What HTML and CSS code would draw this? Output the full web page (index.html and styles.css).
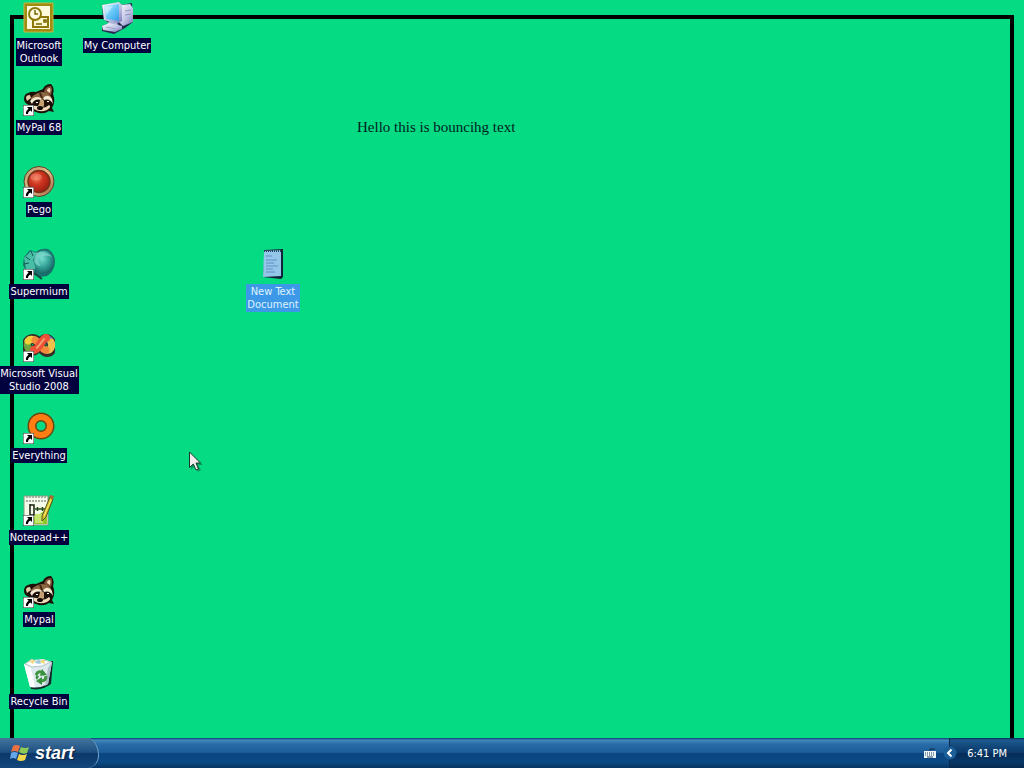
FILE: index.html
```html
<!DOCTYPE html>
<html lang="en">
<head>
<meta charset="utf-8">
<title>Desktop</title>
<link rel="stylesheet" href="styles.css">
</head>
<body>
<svg class="defs" aria-hidden="true">
  <defs>
    <symbol id="shortcut" viewBox="0 0 11 11">
      <path d="M0 0h11v11H0z" fill="#fff" stroke="#222" stroke-width="1"/>
      <path d="M4 2h5v5L7.400 5.400C5.500 6.500 5 7.500 5 9H3C2.500 6.500 4 5 5.600 3.700z" fill="#000"/>
    </symbol>
    <symbol id="raccoon" viewBox="0 0 32 32">
      <path d="M1 15Q1 10 5 9Q9 7 13 8L20 5Q22 0 28 0Q32 4 30 10Q33 18 29 24L31 28L26 27Q20 31 13 28Q8 27 6 21Q1 19 1 15z" fill="#1d1008"/>
      <path d="M21 8Q22 2 28 2Q30 5 28 11z" fill="#7c5334"/>
      <path d="M24 7Q24 4 27 4Q28 6 27 9z" fill="#f3dcc0"/>
      <path d="M3 14Q3 11 7 11L8 14L4 17z" fill="#e5cda7"/>
      <path d="M8 14Q12 9 19 8Q27 8 29 15Q23 10 19 15Q12 12 8 17z" fill="#8e6743"/>
      <path d="M7 17Q12 11 18 14L19 16Q11 14 9 20zM20 14Q25 9 29 15L30 20Q27 14 21 16z" fill="#f5e9d2"/>
      <path d="M17 16Q20 14 21 17L21 22Q18 26 14 23Q17 20 17 16z" fill="#c6a071"/>
      <path d="M10 22Q14 21 17 24Q23 24 26 21Q29 23 24 26Q17 29 11 25z" fill="#f0dcb9"/>
      <ellipse cx="17" cy="24" rx="3" ry="2" fill="#120a08"/>
      <path d="M13 18h2v1h-2zM24 17h2v1h-2z" fill="#fff"/>
      <path d="M17 9L19 14" stroke="#442713" stroke-width="2"/>
    </symbol>
    <linearGradient id="screen" x1="0" y1="0" x2="1" y2="1"><stop stop-color="#d5f5ff"/><stop offset=".5" stop-color="#68c9f6"/><stop offset="1" stop-color="#359ce7"/></linearGradient>
    <linearGradient id="shell" x1="0" y1="0" x2="1" y2="1"><stop stop-color="#fff"/><stop offset=".6" stop-color="#bdc2e3"/><stop offset="1" stop-color="#7074b0"/></linearGradient>
    <radialGradient id="red" cx=".38" cy=".35" r=".75"><stop stop-color="#f07855"/><stop offset=".4" stop-color="#ce3521"/><stop offset="1" stop-color="#8d1a0d"/></radialGradient>
    <linearGradient id="ring" x1="0" y1="0" x2="1" y2="1"><stop stop-color="#b59468"/><stop offset=".5" stop-color="#e5bf8a"/><stop offset="1" stop-color="#9c5a38"/></linearGradient>
    <radialGradient id="teal" cx=".4" cy=".35" r=".7"><stop stop-color="#79dfce"/><stop offset=".5" stop-color="#36a69a"/><stop offset="1" stop-color="#145f60"/></radialGradient>
  </defs>
</svg>
<main class="desktop">
  <div class="frame"></div>
  <p class="bouncing">Hello this is bouncihg text</p>

  <div class="icons">
    <button class="item" type="button">
      <svg class="icon" viewBox="0 0 32 32" aria-hidden="true">
        <path d="M2.500 2.500h26v26h-26z" fill="#fffadc" stroke="#a18c12" stroke-width="3"/>
        <path d="M1 1h29v29H1z" fill="none" stroke="#c9b444"/>
        <path d="M10 15h15v10H10z" fill="#fff7cc" stroke="#8d7909" stroke-width="2"/>
        <circle cx="12" cy="12" r="6" fill="#fffbe2" stroke="#8d7909" stroke-width="2"/>
        <path d="M12 8v4h3M13 22h6M21 18h2v2h-2z" fill="none" stroke="#756405" stroke-width="1.500"/>
      </svg>
      <span class="label">Microsoft<br>Outlook</span>
    </button>
    <button class="item" type="button">
      <svg class="icon" viewBox="0 0 32 32" aria-hidden="true"><use href="#raccoon"/><use href="#shortcut" x="0" y="21" width="11" height="11"/></svg>
      <span class="label">MyPal 68</span>
    </button>
    <button class="item" type="button">
      <svg class="icon" viewBox="0 0 32 32" aria-hidden="true">
        <circle cx="16" cy="15.500" r="15" fill="url(#ring)" stroke="#59442a"/>
        <circle cx="16" cy="15.500" r="11" fill="url(#red)" stroke="#74321b" stroke-width="1.500"/>
        <ellipse cx="13" cy="11" rx="6" ry="3.500" fill="#ffb49a" opacity=".3"/>
        <use href="#shortcut" x="0" y="21" width="11" height="11"/>
      </svg>
      <span class="label">Pego</span>
    </button>
    <button class="item" type="button">
      <svg class="icon" viewBox="0 0 32 32" aria-hidden="true">
        <path d="M1 9L7 2L13 4Q18 0 25 1Q32 5 32 14Q31 24 24 28L17 29L11 27L3 23L0 17z" fill="#1b6f6c"/>
        <path d="M1 10L8 3L14 5L10 12L13 19L9 26L3 21z" fill="#46bfa6"/>
        <ellipse cx="21" cy="14" rx="10" ry="11.500" fill="url(#teal)"/>
        <path d="M13 5Q22 1 29 9Q22 6 16 10Q14 14 18 18Q12 18 11 12z" fill="#8be0d5" opacity=".6"/>
        <path d="M3 9L7 12M8 3L10 8M1 16L6 15" stroke="#155956"/>
        <path d="M11 25L19 31" stroke="#134744" stroke-width="2"/>
        <use href="#shortcut" x="0" y="21" width="11" height="11"/>
      </svg>
      <span class="label">Supermium</span>
    </button>
    <button class="item" type="button">
      <svg class="icon" viewBox="0 0 32 32" aria-hidden="true">
        <g fill="none" stroke-linecap="round">
          <path d="M9 21C2 21 2 9 10 9C16 9 18 22 24 22C31 22 30 9 23 9C17 9 15 21 9 21" stroke="#372e29" stroke-width="10"/>
          <path d="M9 20C4 20 3 14 6 11" stroke="#6da63f" stroke-width="7"/>
          <path d="M5 11Q7 8 12 10" stroke="#f2cf3b" stroke-width="7"/>
          <path d="M28 13Q27 8 22 9" stroke="#5878bb" stroke-width="7"/>
          <path d="M28 12C30 17 27 21 23 20" stroke="#f0c04c" stroke-width="7"/>
          <path d="M12 10C16 12 18 20 23 20" stroke="#f28a3b" stroke-width="7"/>
          <path d="M23 8C18 9 16 20 11 20" stroke="#ed5138" stroke-width="8"/>
          <path d="M14 18L21 9" stroke="#f6a170" stroke-width="2"/>
        </g>
        <use href="#shortcut" x="0" y="21" width="11" height="11"/>
      </svg>
      <span class="label">Microsoft Visual<br>Studio 2008</span>
    </button>
    <button class="item" type="button">
      <svg class="icon" viewBox="0 0 32 32" aria-hidden="true">
        <path d="M11 21L7 25" stroke="#684713" stroke-width="6"/>
        <circle cx="18" cy="14" r="9" fill="none" stroke="#684713" stroke-width="9"/>
        <circle cx="18" cy="14" r="9" fill="none" stroke="#ff7d13" stroke-width="6"/>
        <use href="#shortcut" x="0" y="21" width="11" height="11"/>
      </svg>
      <span class="label">Everything</span>
    </button>
    <button class="item" type="button">
      <svg class="icon" viewBox="0 0 32 32" aria-hidden="true">
        <path d="M1 2h24v29H1z" fill="#f6fae8" stroke="#8a977d"/>
        <path d="M3 27L24 16V30H4z" fill="#8ec92c"/><path d="M12 20h8v9h-8z" fill="#c5e56c"/>
        <path d="M3 3h20M3 7h20" stroke="#a5aea2" stroke-width="2" stroke-dasharray="2 1"/>
        <path d="M7 10v14M7 11h4v10H7" fill="none" stroke="#16200e" stroke-width="1.500"/>
        <path d="M12 15h5m-2.500-2v4M17 15h5m-2.500-2v4" stroke="#234b18" stroke-width="1.500"/>
        <path d="M27 3L30 5L23 23L19 27V22z" fill="#d8c22b" stroke="#565118"/><path d="M26 3L27 1L31 2L30 5z" fill="#a86838"/>
        <path d="M28 6L21 22" stroke="#f6ef83"/>
        <use href="#shortcut" x="0" y="21" width="11" height="11"/>
      </svg>
      <span class="label">Notepad++</span>
    </button>
    <button class="item" type="button">
      <svg class="icon" viewBox="0 0 32 32" aria-hidden="true"><use href="#raccoon"/><use href="#shortcut" x="0" y="21" width="11" height="11"/></svg>
      <span class="label">Mypal</span>
    </button>
    <button class="item" type="button">
      <svg class="icon" viewBox="0 0 32 32" aria-hidden="true">
        <path d="M3 6L30 3L28 26Q19 33 8 31z" fill="#14282c"/>
        <path d="M1 6L10 2L20 1L29 4L25 26Q16 31 7 29z" fill="#dce9ed"/>
        <path d="M1 6L7 29L12 29L8 10z" fill="#fff"/><path d="M29 4L25 10L22 28L25 26z" fill="#adbdc7"/>
        <path d="M2 6L9 9L19 8L28 4L21 2L14 5L9 1z" fill="#faffff" stroke="#b5c5c4"/>
        <path d="M6 3L10 6L12 2zM17 4L21 1L22 6z" fill="#f4d66d"/><path d="M12 5L16 1L18 6z" fill="#9cc6dc"/>
        <path d="M13 17Q15 12 20 15M23 18Q23 23 18 23" fill="none" stroke="#41973f" stroke-width="3"/>
        <path d="M19 11L24 17L17 18zM19 19V27L13 23zM14 22Q12 20 13 17L16 18z" fill="#359038"/>
      </svg>
      <span class="label">Recycle Bin</span>
    </button>
    <button class="item computer" type="button">
      <svg class="icon" viewBox="0 0 32 32" aria-hidden="true">
        <path d="M20 3L31 1L32 20L24 26L13 32L1 29L1 24L8 21L2 17L1 3L19 1z" fill="#252c52"/>
        <path d="M20 3L29 2L32 6V20L22 24L17 19z" fill="url(#shell)"/>
        <path d="M24 9L30 8M24 13L30 12" stroke="#8d95c0"/>
        <path d="M1 3L18 0L21 3V19L15 22L3 18z" fill="url(#shell)"/>
        <path d="M3 4L18 2V19L5 17z" fill="url(#screen)"/>
        <path d="M4 5L12 4L5 13z" fill="#fff" opacity=".4"/>
        <path d="M8 19L16 21L18 24L10 26L6 23z" fill="#aeb5d6"/>
        <path d="M1 24L8 21L21 24V27L14 30L2 28z" fill="url(#shell)"/>
        <path d="M5 25L15 27" stroke="#a0a6c8"/>
      </svg>
      <span class="label">My Computer</span>
    </button>
    <button class="item document" type="button">
      <svg class="icon" viewBox="0 0 32 32" aria-hidden="true">
        <path d="M8 2L26 1V29L24 31L6 29z" fill="#102338"/>
        <path d="M7 3L24 2V28L6 29z" fill="#94c6ea"/>
        <path d="M7 3h17" stroke="#274865" stroke-width="2" stroke-dasharray="1 1"/>
        <path d="M9 8h6M9 12h11M9 15h8M9 18h12M9 21h7M9 24h9" stroke="#5c92c2"/>
      </svg>
      <span class="label selected">New Text<br>Document</span>
    </button>
  </div>

  <svg class="cursor" viewBox="0 0 14 22" aria-hidden="true">
    <path d="M2 3V19L6 15L9 21L12 19L9 14H14z" fill="#087d4d" opacity=".65"/>
    <path d="M.500 1V16.500L4.300 13L7 19L9.500 18L7 12H11.500z" fill="#f2ecec" stroke="#183829"/>
  </svg>
</main>

<footer class="taskbar">
  <button class="start" type="button">
    <svg class="flag" viewBox="0 0 20 20" aria-hidden="true">
      <path d="M3 3Q6 1 10 3L8 9Q4 7 1 9z" fill="#ed7042"/>
      <path d="M11 4Q15 6 19 4L17 10Q13 12 9 9z" fill="#8fca55"/>
      <path d="M1 10Q4 8 8 10L6 16Q3 14 0 16z" fill="#65a6eb"/>
      <path d="M9 11Q13 13 17 11L15 17Q11 19 7 17z" fill="#f4d84c"/>
    </svg>
    <span>start</span>
  </button>
  <div class="tray-tools">
    <svg class="keyboard" viewBox="0 0 12 11" aria-hidden="true">
      <path d="M6 3V1h5" fill="none" stroke="#102c48"/>
      <path d="M0 3h12v7H0z" fill="#eef5f8"/>
      <path d="M1 5h10M1 7h10" stroke="#25435e" stroke-dasharray="1 1"/><path d="M3 9h6" stroke="#25435e"/>
    </svg>
  </div>
  <div class="tray">
    <button class="expand" type="button" aria-label="Show hidden icons">
      <svg viewBox="0 0 14 14" aria-hidden="true"><circle cx="7" cy="7" r="6.500" fill="#1c5f98"/><path d="M8.500 3.500L5 7L8.500 10.500" fill="none" stroke="#fff" stroke-width="2"/></svg>
    </button>
    <time class="clock">6:41 PM</time>
  </div>
</footer>
</body>
</html>
```
FILE: styles.css
```css
* { box-sizing: border-box; }

body {
  margin: 0;
  min-height: 100vh;
  display: flex;
  flex-direction: column;
  background: #04db83;
  font-family: "DejaVu Sans Condensed", "Noto Sans", sans-serif;
  font-size: 11px;
}

button {
  border: 0;
  padding: 0;
  background: none;
  font: inherit;
  color: inherit;
}

.defs { position: absolute; width: 0; height: 0; }

.desktop {
  position: relative;
  flex: 1;
  background: #04db83;
}

.frame {
  position: absolute;
  inset: 15px 10px 0;
  border: 4px solid #000;
  border-bottom: 0;
}

.bouncing {
  position: absolute;
  left: 357px;
  top: 118px;
  margin: 0;
  font: 15px/18px "Liberation Serif", serif;
  color: #022;
}

.icons {
  position: relative;
  display: grid;
  grid-template-rows: repeat(9, 82px);
  grid-auto-columns: 78px;
  grid-auto-flow: column;
}

.item {
  display: flex;
  flex-direction: column;
  align-items: center;
  gap: 4px;
  padding-top: 2px;
}

.computer { grid-area: 1 / 2; }
.document { grid-area: 4 / 4; }

.icon { width: 32px; height: 32px; flex: none; }

.label {
  padding: 1px;
  background: #02023f;
  color: #fff;
  line-height: 13px;
  white-space: nowrap;
}

.selected { background: #3d98e8; color: #dff3ff; }

.cursor {
  position: absolute;
  left: 189px;
  top: 451px;
  width: 14px;
  height: 22px;
}

.taskbar {
  display: flex;
  height: 30px;
  color: #fff;
  background: linear-gradient(#0a3c6c, #4388be 7%, #2a6ca7 20%, #1b5d9a 48%, #0a4580 52%, #0b4a85 80%, #073563);
}

.start {
  display: flex;
  align-items: center;
  gap: 5px;
  width: 99px;
  padding-left: 10px;
  border-right: 1px solid #75a6c9;
  border-radius: 0 12px 12px 0 / 0 18px 12px 0;
  background: linear-gradient(#45749b, #386996 15%, #1c4e80 48%, #0b376a 52%, #14477c);
  font: italic bold 18px/24px "Liberation Sans", sans-serif;
  text-shadow: 1px 1px 1px #082444;
}

.flag { width: 20px; height: 20px; }

.tray-tools {
  display: flex;
  align-items: center;
  margin-left: auto;
  padding-right: 13px;
}

.keyboard { width: 12px; height: 11px; }

.tray {
  display: flex;
  align-items: center;
  justify-content: space-between;
  width: 75px;
  padding-right: 17px;
  border-left: 1px solid #062c51;
  background: linear-gradient(#0a2e57, #1d5a91 7%, #114678 30%, #0b3b6c 48%, #052c59 52%, #073867 80%, #06284d);
}

.expand { width: 14px; height: 14px; margin-left: -7px; }
.expand svg { display: block; width: 14px; height: 14px; }
.clock { font-size: 11px; white-space: nowrap; }
```
